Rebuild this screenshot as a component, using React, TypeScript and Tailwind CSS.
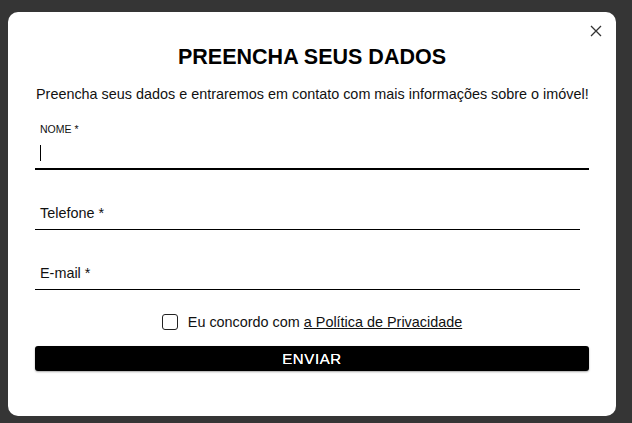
import React from 'react';

const font = { fontFamily: '"Liberation Sans", Arial, sans-serif' };

const App: React.FC = () => {
  return (
    <div
      className="w-[632px] h-[423px] overflow-hidden bg-[#353535] pt-[12px] pl-[8px]"
      style={font}
    >
      {/* modal */}
      <div className="relative w-[608px] h-[404px] bg-white rounded-[10px] px-[27px] pt-[32px] text-black">
        {/* fechar */}
        <button className="absolute top-[13px] right-[14px] w-[12px] h-[12px] text-[#333]">
          <svg viewBox="0 0 12 12" width="12" height="12" fill="none" stroke="currentColor" strokeWidth="1.3">
            <path d="M1 1l10 10M11 1L1 11" />
          </svg>
        </button>

        <h2 className="text-center font-bold text-[21.5px] leading-[26px]">
          PREENCHA SEUS DADOS
        </h2>

        <p className="mt-[15px] pl-[1px] text-[14.4px] leading-[18px] text-[#111] whitespace-nowrap">
          Preencha seus dados e entraremos em contato com mais informações sobre o imóvel!
        </p>

        {/* nome */}
        <div className="mt-[20px]">
          <label className="block pl-[5px] text-[10.5px] leading-[12px] text-[#111]">NOME *</label>
          <div className="pl-[5px] pt-[10px] pb-[7px] border-b-2 border-black">
            <div className="w-[1px] h-[16px] bg-black" />
          </div>
        </div>

        {/* telefone */}
        <div className="mt-[26px] w-[545px] h-[34px] border-b border-black flex items-end pb-[8px] pl-[5px]">
          <span className="text-[14.4px] leading-[16px] text-[#111]">Telefone *</span>
        </div>

        {/* e-mail */}
        <div className="mt-[26px] w-[545px] h-[34px] border-b border-black flex items-end pb-[8px] pl-[5px]">
          <span className="text-[14.4px] leading-[16px] text-[#111]">E-mail *</span>
        </div>

        {/* politica */}
        <div className="mt-[23px] flex items-center justify-center gap-[10px]">
          <span className="w-[16px] h-[16px] border-[1.5px] border-[#222] rounded-[3px]" />
          <span className="text-[14.4px] leading-[18px] text-[#111]">
            Eu concordo com <span className="underline">a Política de Privacidade</span>
          </span>
        </div>

        <button className="mt-[15px] w-full h-[25px] bg-black rounded-[3px] shadow-[0_1px_2px_rgba(0,0,0,0.35)] text-white font-normal text-[15px] tracking-[0.6px] leading-[25px] [text-shadow:0_0_0.6px_#fff]">
          ENVIAR
        </button>
      </div>
    </div>
  );
};

export default App;
